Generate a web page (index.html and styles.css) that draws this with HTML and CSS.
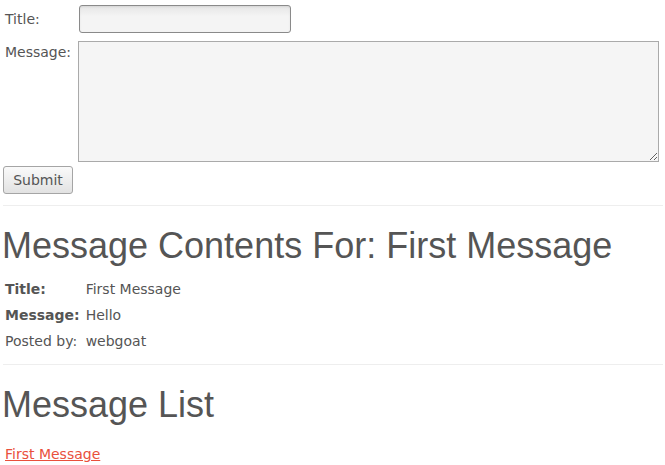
FILE: index.html
```html
<!DOCTYPE html>
<html>
<head>
<meta charset="utf-8">
<link rel="stylesheet" href="styles.css">
</head>
<body>
<form class="post-form">
  <div class="form-grid">
    <label class="form-label label-title">Title:</label>
    <input class="title-input" type="text">
    <label class="form-label label-message">Message:</label>
    <textarea class="message-input"></textarea>
  </div>
  <button class="submit-btn" type="button">Submit</button>
</form>
<hr class="divider">
<h2 class="heading">Message Contents For: First Message</h2>
<div class="details">
  <span class="d-label strong">Title:</span><span class="d-value">First Message</span>
  <span class="d-label strong">Message:</span><span class="d-value">Hello</span>
  <span class="d-label">Posted by:</span><span class="d-value">webgoat</span>
</div>
<hr class="divider">
<h2 class="heading">Message List</h2>
<div class="list">
  <a class="msg-link" href="#">First Message</a>
</div>
</body>
</html>
```
FILE: styles.css
```css
html, body {
  margin: 0;
  background: #fff;
}
body {
  padding: 0 2px 0 3px;
  font-family: "DejaVu Sans", sans-serif;
  font-size: 14px;
  color: #555;
}
.post-form {
  margin: 0;
  padding-top: 5px;
}
.form-grid {
  display: grid;
  grid-template-columns: 75px 580px;
  row-gap: 8px;
  align-items: start;
}
.form-label {
  padding-left: 2px;
  line-height: 20px;
}
.label-title {
  align-self: center;
}
.label-message {
  padding-top: 1px;
}
.title-input {
  margin: 0 0 0 1px;
  width: 212px;
  height: 28px;
  box-sizing: border-box;
  border: 1px solid #8a8a8a;
  border-radius: 3px;
  background: linear-gradient(#e6e6e6, #f4f4f4 40%, #f4f4f4);
  box-shadow: inset 0 1px 2px rgba(0,0,0,0.08);
  font: inherit;
  color: #555;
}
.message-input {
  margin: 0;
  width: 581px;
  height: 121px;
  box-sizing: border-box;
  border: 1px solid #aaa;
  background: #f5f5f5;
  font: inherit;
  color: #555;
  resize: both;
}
.submit-btn {
  display: block;
  margin: 4px 0 0 0;
  width: 70px;
  height: 28px;
  box-sizing: border-box;
  border: 1px solid #a5a5a5;
  border-radius: 3px;
  background: linear-gradient(#fafafa, #e2e2e2);
  font-family: "DejaVu Sans", sans-serif;
  font-size: 14px;
  color: #555;
  padding: 0;
}
.divider {
  margin: 11px 0 0 0;
  border: 0;
  border-top: 1px solid #eee;
  height: 0;
}
.heading {
  margin: 20px 0 10px -1px;
  font-family: "Liberation Sans", Arial, sans-serif;
  font-weight: normal;
  font-size: 36px;
  line-height: 40px;
  color: #555;
}
.details {
  display: grid;
  grid-template-columns: auto 1fr;
  column-gap: 6px;
  grid-auto-rows: 26px;
  align-items: center;
  padding-left: 2px;
  margin-bottom: 10px;
}
.strong {
  font-weight: bold;
}
.details + .divider {
  margin-top: 10px;
}
.list {
  padding: 9px 0 0 2px;
  line-height: 20px;
}
.msg-link {
  color: #e9503c;
  text-decoration: underline;
}
```
